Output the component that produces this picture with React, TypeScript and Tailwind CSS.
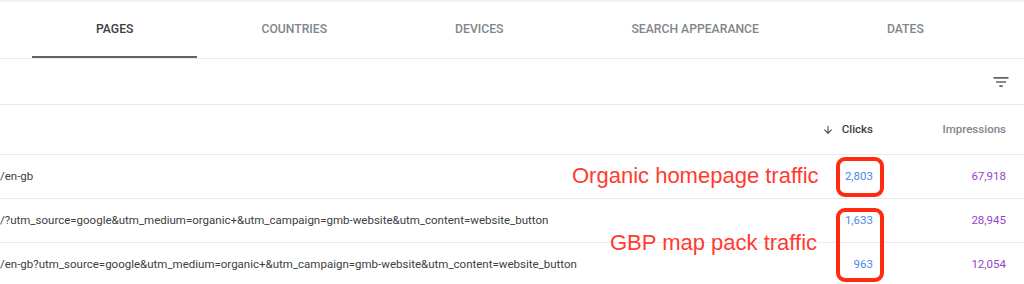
const tabs = ['Pages', 'Countries', 'Devices', 'Search appearance', 'Dates']

const rows = [
  { page: '/en-gb', clicks: '2,803', impressions: '67,918' },
  {
    page: '/?utm_source=google&utm_medium=organic+&utm_campaign=gmb-website&utm_content=website_button',
    clicks: '1,633',
    impressions: '28,945',
  },
  {
    page: '/en-gb?utm_source=google&utm_medium=organic+&utm_campaign=gmb-website&utm_content=website_button',
    clicks: '963',
    impressions: '12,054',
  },
]

function FilterIcon() {
  return (
    <svg width="20" height="20" viewBox="0 0 24 24" fill="#5f6368">
      <path d="M10 18h4v-2h-4v2zM3 6v2h18V6H3zm3 7h12v-2H6v2z" />
    </svg>
  )
}

function ArrowDown() {
  return (
    <svg width="12" height="12" viewBox="0 0 24 24" fill="#3c4043">
      <path d="M20 12l-1.41-1.41L13 16.17V4h-2v12.17l-5.58-5.59L4 12l8 8 8-8z" />
    </svg>
  )
}

export default function App() {
  return (
    <div
      className="relative w-[1024px] h-[284px] overflow-hidden bg-white border-t-2 border-[#eef1f6]"
      style={{ fontFamily: 'Roboto, "Liberation Sans", sans-serif' }}
    >
      {/* tabs */}
      <div className="flex pl-[32px] h-[57px] border-b border-[#e8eaed]">
        {tabs.map((t, i) => (
          <div
            key={t}
            className={
              i === 0
                ? 'flex items-center px-[64px] h-full border-b-2 border-[#5f6368] text-[12.2px] font-medium uppercase text-[#3c4043]'
                : 'flex items-center px-[64px] h-full border-b-2 border-transparent text-[12.2px] font-medium uppercase text-[#80868b]'
            }
          >
            {t}
          </div>
        ))}
      </div>

      {/* filter bar */}
      <div className="flex items-center justify-end h-[46px] pr-[13px] border-b border-[#e8eaed]">
        <FilterIcon />
      </div>

      {/* header */}
      <div className="flex items-center h-[50px] border-b border-[#e8eaed] text-[11.5px] font-medium">
        <div className="flex-1" />
        <div className="w-[120px] flex items-center justify-end gap-[8px] text-[#3c4043]">
          <ArrowDown />
          <span>Clicks</span>
        </div>
        <div className="w-[151px] pr-[18px] text-right text-[#80868b]">Impressions</div>
      </div>

      {/* rows */}
      {rows.map((r) => (
        <div key={r.page} className="flex items-center h-[44px] border-b border-[#e8eaed] text-[11.5px]">
          <div className="flex-1 min-w-0 whitespace-nowrap text-[#3c4043]">{r.page}</div>
          <div className="w-[120px] text-right text-[#4a89e8]">{r.clicks}</div>
          <div className="w-[151px] pr-[18px] text-right text-[#9444cc]">{r.impressions}</div>
        </div>
      ))}

      {/* annotations */}
      <div
        className="absolute left-[572px] top-[161px] text-[22px] leading-[26px] text-[#ff3b30] whitespace-nowrap"
        style={{ fontFamily: '"Liberation Sans", Arial, sans-serif' }}
      >
        Organic homepage traffic
      </div>
      <div
        className="absolute left-[610px] top-[228px] text-[22px] leading-[26px] text-[#ff3b30] whitespace-nowrap"
        style={{ fontFamily: '"Liberation Sans", Arial, sans-serif' }}
      >
        GBP map pack traffic
      </div>
      <div className="absolute left-[836px] top-[155px] w-[48px] h-[40px] border-[4px] border-[#ff2a10] rounded-[9px]" />
      <div className="absolute left-[836px] top-[206px] w-[48px] h-[74px] border-[4px] border-[#ff2a10] rounded-[9px]" />
    </div>
  )
}
